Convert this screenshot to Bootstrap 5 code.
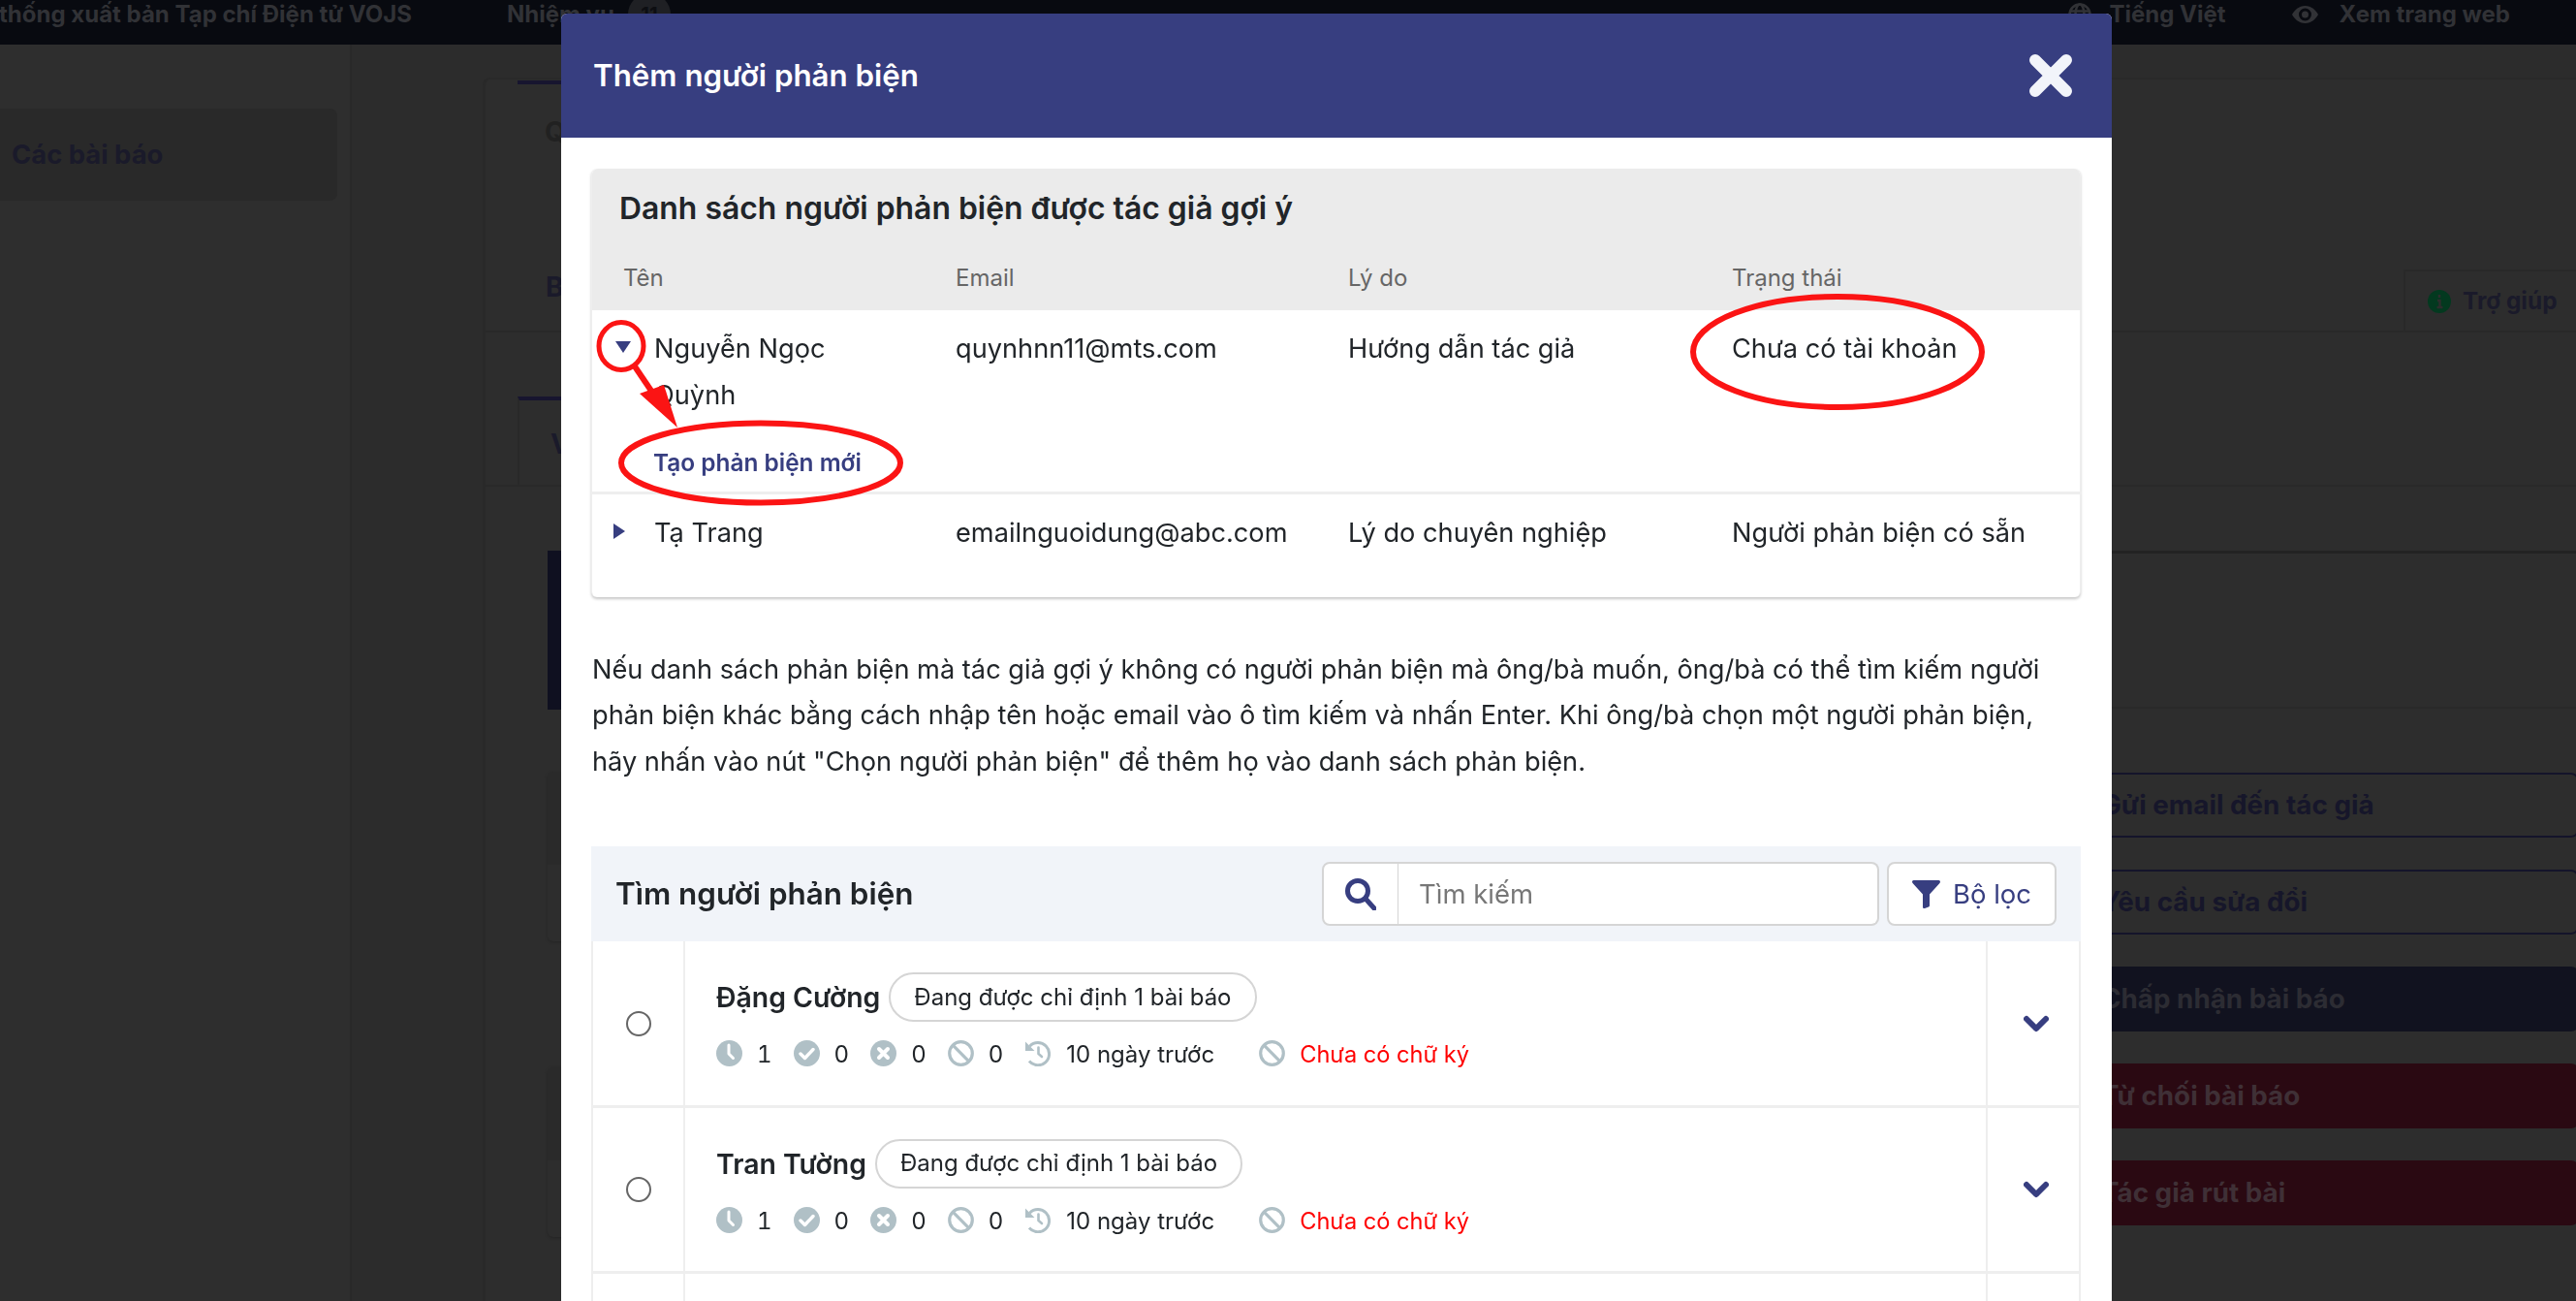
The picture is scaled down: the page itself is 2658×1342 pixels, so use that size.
<!DOCTYPE html>
<html lang="vi">

<head>
  <meta charset="UTF-8">
  <meta name="viewport" content="width=device-width, initial-scale=1.0">
  <title>Thêm người phản biện</title>
  <link href="https://cdn.jsdelivr.net/npm/bootstrap@5.3.0/dist/css/bootstrap.min.css" rel="stylesheet">
  <style>
      html, body { height: 1342px; overflow: hidden; }
      body { background: #2e2e2e; font-family: Inter, "Noto Sans", sans-serif; font-size: 28px; color: #212529; }

      /* trang phía sau modal (đã tối) */
      .top-bar { height: 46px; padding: 0 68px 16px 0; background: #080a10; color: #313236; font-size: 24px; font-weight: 700; white-space: nowrap; }
      .top-brand { margin-left: -1px; }
      .top-task { margin-left: 98px; }
      .top-count { width: 44px; height: 44px; margin-left: 14px; border-radius: 50%; background: #1f2024; color: #0d0e12; font-size: 20px; }
      .top-lang { gap: 18px; margin-right: 68px; }
      .top-view { gap: 22px; }
      .page-wrap { height: 1296px; }
      .page-side { width: 363px; padding-top: 66px; border-right: 2px solid #292929; flex: none; }
      .side-item { width: 348px; height: 95px; padding-left: 12px; background: #292929; border-radius: 0 8px 8px 0; color: #1a1a2a; font-size: 27.400px; font-weight: 700; }
      .page-gap { width: 135px; background: #2c2c2c; flex: none; }
      .page-main { padding-top: 34px; background: #2c2c2c; color: #1a1a2a; font-weight: 700; min-width: 0; }
      .page-frame { height: 100%; background: #2d2d2d; border-top: 2px solid #292929; border-left: 3px solid #292929; border-top-left-radius: 8px; }
      .sec-top { height: 260px; border-bottom: 2px solid #292929; }
      .tab-mark { width: 200px; height: 4px; margin: 1px 0 0 33px; background: #17152f; }
      .sec-q { height: 50px; margin: 24px 0 0 61px; line-height: 50px; color: #212121; }
      .sec-row { margin-top: 117px; height: 63px; }
      .sec-b { margin: -3px 0 0 62px; }
      .help-tab { width: 178px; height: 63px; padding-left: 23px; gap: 12px; border-left: 2px solid #292929; border-top: 2px solid #292929; font-size: 24.400px; }
      .sec-mid { height: 159px; padding: 66px 0 0 33px; border-bottom: 2px solid #292929; }
      .v-tab { width: 500px; height: 93px; padding-left: 32px; border-top: 4px solid #17152f; border-left: 2px solid #292929; }
      .sec-low { padding-top: 66px; }
      .low-left { width: 1565px; margin-left: 64px; flex: none; }
      .dark-block { height: 164px; background: #0f1020; }
      .ghost-box { height: 175px; border-radius: 6px; overflow: hidden; box-shadow: 0 1px 3px #242424; }
      .ghost-box div:first-child { height: 96px; background: #2a2a2a; }
      .box-one { margin-top: 64px; }
      .box-two { margin-top: 130px; }
      .low-right { flex-grow: 1; min-width: 0; }
      .side-head { height: 163px; margin-bottom: 66px; border-top: 3px solid #232323; border-bottom: 2px solid #292929; }
      .act-stack { gap: 33px; margin-right: -3px; }
      .act-btn { height: 67px; padding: 0 0 0 38px; font-size: 27.800px; font-weight: 700; text-align: left; border-radius: 0 8px 8px 0; white-space: nowrap; }
      .act-line { border: 2px solid #14142a; border-left: 0; color: #16162a; background: transparent; }
      .act-navy { border: 0; background: #11121f; color: #2c2c33; }
      .act-red { border: 0; background: #2a0912; color: #3f3036; }

      /* modal */
      .modal-dialog.reviewer-dialog { max-width: 1600px; margin: 14px 0 0 579px; }
      .reviewer-dialog .modal-content { border: 0; border-radius: 6px 6px 0 0; font-size: 27.200px; }
      .reviewer-head { height: 128px; padding: 0 41px 0 33px; background: #373e80; border: 0; border-radius: 6px 6px 0 0; }
      .reviewer-head .modal-title { font-size: 31.300px; font-weight: 600; color: #fff; }
      .head-close { width: 44px; height: 44px; padding: 0; background: none; border: 0; line-height: 0; }
      .reviewer-body { padding: 32px 32px 0 31px; }

      .suggest-card { border: 0; border-left: 1px solid #eee; border-right: 1px solid #eee; border-radius: 6px; box-shadow: 0 2px 3px rgba(0, 0, 0, .22); }
      .suggest-title { height: 80px; padding: 2px 0 0 28px; background: #ebebeb; font-size: 31.900px; font-weight: 600; border-radius: 6px 6px 0 0; }
      .suggest-table { table-layout: fixed; margin: 0; --bs-table-bg: transparent; color: #212529; line-height: 48px; }
      .suggest-table thead tr { background: #ebebeb; }
      .suggest-table th { height: 66px; padding: 0; font-size: 24px; font-weight: 400; color: #666; vertical-align: middle; border: 0; }
      .suggest-table th:first-child { padding-left: 32px; }
      .suggest-table td { padding: 16px 0 0; border-bottom: 3px solid #eee; vertical-align: top; }
      .suggest-table tr:last-child td { height: 107px; border: 0; }
      .suggest-table td.name-cell { padding-left: 20px; }
      .caret-box { width: 44px; flex: none; }
      .caret-down { margin: 16px 0 0 4px; }
      .caret-right { margin: 14px 0 0 2px; }
      .new-link { display: block; margin: 27px 0 12px 43px; font-size: 24.400px; font-weight: 600; line-height: 36px; color: #373e80; text-decoration: none; }
      .annot-layer { position: absolute; top: 0; left: 0; width: 100%; height: 100%; overflow: visible; pointer-events: none; z-index: 5; }

      .intro-text { margin: 51px 0 64px 1px; line-height: 47.600px; }

      .search-panel { height: 98px; padding: 0 25px; background: #f1f4f9; }
      .search-title { font-size: 31.400px; font-weight: 600; }
      .search-group { width: 575px; height: 66px; margin-right: 8px; flex: none; }
      .search-group .input-group-text { width: 80px; padding: 0; justify-content: center; background: #fff; border: 2px solid #d5d5d5; border-radius: 8px 0 0 8px; }
      .search-group .form-control { padding-left: 21px; font-size: 27.500px; color: #333; border: 2px solid #d5d5d5; border-left: 0; border-radius: 0 8px 8px 0; }
      .search-group .form-control::placeholder { color: #777; }
      .filter-btn { width: 175px; height: 66px; padding: 0; gap: 13px; font-size: 27.500px; color: #373e80; background: #fff; border: 2px solid #d5d5d5; border-radius: 8px; }

      .person-row { height: 171.600px; border: 2px solid #eee; border-width: 0 2px 3px; }
      .pick-col { width: 93px; flex: none; }
      .pick-col .form-check-input { width: 26px; height: 26px; margin: 0; border: 2px solid #666; }
      .person-main { padding: 32px 0 0 32px; border-left: 2px solid #eee; border-right: 2px solid #eee; min-width: 0; }
      .person-name { font-size: 28.400px; font-weight: 600; line-height: 51px; }
      .load-pill { height: 51px; margin-left: 9px; padding: 0 24px; border: 2px solid #d5d5d5; border-radius: 26px; font-size: 24px; background: #fff; }
      .person-stats { margin-top: 19px; font-size: 24px; line-height: 30px; white-space: nowrap; }
      .stat-item { gap: 15px; margin-right: 22px; }
      .stat-num { font-variant-numeric: tabular-nums; }
      .stat-item.stat-date { gap: 16px; margin-right: 46px; }
      .stat-item svg { width: 27px; height: 27px; flex: none; }
      .no-sign { font-size: 23.600px; color: #f00; }
      .more-col { width: 94px; padding-left: 6px; flex: none; }
  </style>
</head>

<body>
<svg width="0" height="0" class="d-block" aria-hidden="true">
  <defs>
    <symbol id="ico-clock" viewBox="0 0 27 27">
      <circle cx="13.5" cy="13.5" r="13.5" fill="#b0c0c6"/>
      <path d="M13 5v9l4.5 4.5" fill="none" stroke="#fff" stroke-width="3" stroke-linecap="round" stroke-linejoin="round"/>
    </symbol>
    <symbol id="ico-ok" viewBox="0 0 27 27">
      <circle cx="13.5" cy="13.5" r="13.5" fill="#b0c0c6"/>
      <path d="M7 14l4.5 4.5L20 9.5" fill="none" stroke="#fff" stroke-width="3.4" stroke-linecap="round" stroke-linejoin="round"/>
    </symbol>
    <symbol id="ico-no" viewBox="0 0 27 27">
      <circle cx="13.5" cy="13.5" r="13.5" fill="#b0c0c6"/>
      <path d="M9 9l9 9M18 9l-9 9" fill="none" stroke="#fff" stroke-width="4" stroke-linecap="round"/>
    </symbol>
    <symbol id="ico-ban" viewBox="0 0 27 27">
      <circle cx="13.5" cy="13.5" r="11.8" fill="none" stroke="#b0c0c6" stroke-width="3.2"/>
      <path d="M5.2 5.2l16.6 16.6" stroke="#b0c0c6" stroke-width="3.2"/>
    </symbol>
    <symbol id="ico-history" viewBox="0 0 27 27">
      <path d="M5.5 6.2A11.6 11.6 0 1 1 5 21.5" fill="none" stroke="#b0c0c6" stroke-width="3"/>
      <path d="M1 1.5l9.5 9.5H1z" fill="#b0c0c6"/>
      <path d="M14.5 7.5v6.5l3.5 3" fill="none" stroke="#b0c0c6" stroke-width="2.6" stroke-linecap="round"/>
    </symbol>
  </defs>
</svg>

<!-- trang phía sau -->
<nav class="top-bar d-flex align-items-center">
  <span class="top-brand">thống xuất bản Tạp chí Điện tử VOJS</span>
  <span class="top-task">Nhiệm vụ</span>
  <span class="top-count d-flex align-items-center justify-content-center">11</span>
  <span class="top-lang d-flex align-items-center ms-auto">
    <svg width="24" height="24" viewBox="0 0 24 24" fill="none" stroke="#313236" stroke-width="2.5"><circle cx="12" cy="12" r="10.5"/><ellipse cx="12" cy="12" rx="4.5" ry="10.5"/><path d="M2 8.5h20M2 15.5h20"/></svg>
    Tiếng Việt
  </span>
  <span class="top-view d-flex align-items-center">
    <svg width="27" height="18" viewBox="0 0 27 18"><path d="M13.5 0C7 0 2.500 4.500 0 9c2.500 4.500 7 9 13.500 9S24.500 13.500 27 9C24.500 4.500 20 0 13.500 0zm0 15.500a6.500 6.500 0 1 1 0-13 6.500 6.500 0 0 1 0 13zm0-10a3.500 3.500 0 1 0 0 7 3.500 3.500 0 0 0 0-7z" fill="#313236"/></svg>
    Xem trang web
  </span>
</nav>

<div class="page-wrap d-flex">
  <aside class="page-side">
    <div class="side-item d-flex align-items-center">Các bài báo</div>
  </aside>
  <div class="page-gap"></div>
  <main class="page-main flex-grow-1">
    <div class="page-frame">
      <section class="sec-top">
        <div class="tab-mark"></div>
        <div class="sec-q">Q</div>
        <div class="sec-row d-flex justify-content-between">
          <span class="sec-b">B</span>
          <div class="help-tab d-flex align-items-center">
            <svg width="24" height="24" viewBox="0 0 24 24"><circle cx="12" cy="12" r="12" fill="#03391f"/><path d="M12 5v3M10 11h2.500v7M9.500 18h6" stroke="#2d2d2d" stroke-width="2.500" fill="none"/></svg>
            Trợ giúp
          </div>
        </div>
      </section>
      <section class="sec-mid">
        <div class="v-tab d-flex align-items-center">V</div>
      </section>
      <section class="sec-low d-flex">
        <div class="low-left">
          <div class="dark-block"></div>
          <div class="ghost-box box-one"><div></div></div>
          <div class="ghost-box box-two"><div></div></div>
        </div>
        <div class="low-right">
          <div class="side-head"></div>
          <div class="act-stack d-flex flex-column">
            <button class="btn act-btn act-line" type="button">Gửi email đến tác giả</button>
            <button class="btn act-btn act-line" type="button">Yêu cầu sửa đổi</button>
            <button class="btn act-btn act-navy" type="button">Chấp nhận bài báo</button>
            <button class="btn act-btn act-red" type="button">Từ chối bài báo</button>
            <button class="btn act-btn act-red" type="button">Tác giả rút bài</button>
          </div>
        </div>
      </section>
    </div>
  </main>
</div>

<!-- modal -->
<div class="modal d-block" tabindex="-1">
  <div class="modal-dialog reviewer-dialog">
    <div class="modal-content">
      <div class="modal-header reviewer-head d-flex justify-content-between align-items-center">
        <h5 class="modal-title">Thêm người phản biện</h5>
        <button type="button" class="head-close" aria-label="Đóng">
          <svg width="44" height="44" viewBox="0 0 44 44"><path d="M6 6l32 32M38 6L6 38" stroke="#f2f4fa" stroke-width="12" stroke-linecap="round"/></svg>
        </button>
      </div>
      <div class="modal-body reviewer-body">

        <div class="card suggest-card">
          <div class="suggest-title d-flex align-items-center">Danh sách người phản biện được tác giả gợi ý</div>
          <table class="table suggest-table">
            <colgroup>
              <col style="width: 375px">
              <col style="width: 405px">
              <col style="width: 396px">
              <col style="width: 361px">
            </colgroup>
            <thead>
            <tr>
              <th>Tên</th>
              <th>Email</th>
              <th>Lý do</th>
              <th>Trạng thái</th>
            </tr>
            </thead>
            <tbody>
            <tr>
              <td class="name-cell">
                <div class="d-flex">
                  <div class="caret-box">
                    <svg class="caret-down d-block" width="16" height="12" viewBox="0 0 16 12"><path d="M0 0h16L8 12z" fill="#373e80"/></svg>
                  </div>
                  <div>Nguyễn Ngọc<br>Quỳnh</div>
                </div>
                <a class="new-link" href="#">Tạo phản biện mới</a>
              </td>
              <td>quynhnn11@mts.com</td>
              <td>Hướng dẫn tác giả</td>
              <td>Chưa có tài khoản</td>
            </tr>
            <tr>
              <td class="name-cell">
                <div class="d-flex">
                  <div class="caret-box">
                    <svg class="caret-right d-block" width="12" height="16" viewBox="0 0 12 16"><path d="M0 0l12 8L0 16z" fill="#373e80"/></svg>
                  </div>
                  <div>Tạ Trang</div>
                </div>
              </td>
              <td>emailnguoidung@abc.com</td>
              <td>Lý do chuyên nghiệp</td>
              <td>Người phản biện có sẵn</td>
            </tr>
            </tbody>
          </table>
          <svg class="annot-layer" aria-hidden="true">
            <g fill="none" stroke="#fb1414">
              <ellipse cx="30" cy="183" rx="23" ry="24.500" stroke-width="5"/>
              <path d="M44 204L67 238" stroke-width="6"/>
              <ellipse cx="174" cy="303.500" rx="144" ry="41" stroke-width="6"/>
              <ellipse cx="1285" cy="189" rx="149" ry="57" stroke-width="6"/>
            </g>
            <path d="M88 267L49 232L74 223z" fill="#fb1414"/>
          </svg>
        </div>

        <p class="intro-text">Nếu danh sách phản biện mà tác giả gợi ý không có người phản biện mà ông/bà muốn, ông/bà có thể tìm kiếm người phản biện khác bằng cách nhập tên hoặc email vào ô tìm kiếm và nhấn Enter. Khi ông/bà chọn một người phản biện, hãy nhấn vào nút "Chọn người phản biện" để thêm họ vào danh sách phản biện.</p>

        <div class="search-panel d-flex align-items-center">
          <div class="search-title me-auto">Tìm người phản biện</div>
          <div class="input-group search-group">
            <span class="input-group-text">
              <svg width="32" height="33" viewBox="0 0 32 33" fill="none" stroke="#373e80" stroke-width="5"><circle cx="13" cy="13" r="10.500"/><path d="M21 21l9 10" stroke-linecap="round"/></svg>
            </span>
            <input type="text" class="form-control" placeholder="Tìm kiếm">
          </div>
          <button class="btn filter-btn d-flex align-items-center justify-content-center" type="button">
            <svg width="29" height="29" viewBox="0 0 29 29"><path d="M0 1.500Q0 0 1.500 0h26Q29 0 29 1.500q0 1-1 2L18 14.500V26q0 1-1 1.500l-4 1.500q-2 .5-2-1.500V14.500L1 3.500q-1-1-1-2z" fill="#373e80"/></svg>
            Bộ lọc
          </button>
        </div>

        <div class="person-row d-flex">
          <div class="pick-col d-flex align-items-center justify-content-center"><input class="form-check-input" type="radio" name="reviewer"></div>
          <div class="person-main flex-grow-1">
            <div class="d-flex">
              <span class="person-name">Đặng Cường</span>
              <span class="load-pill d-flex align-items-center">Đang được chỉ định 1 bài báo</span>
            </div>
            <div class="person-stats d-flex">
              <span class="stat-item stat-num d-flex"><svg><use href="#ico-clock"/></svg>1</span>
              <span class="stat-item stat-num d-flex"><svg><use href="#ico-ok"/></svg>0</span>
              <span class="stat-item stat-num d-flex"><svg><use href="#ico-no"/></svg>0</span>
              <span class="stat-item stat-num d-flex"><svg><use href="#ico-ban"/></svg>0</span>
              <span class="stat-item stat-date d-flex"><svg><use href="#ico-history"/></svg>10 ngày trước</span>
              <span class="stat-item no-sign d-flex"><svg><use href="#ico-ban"/></svg>Chưa có chữ ký</span>
            </div>
          </div>
          <div class="more-col d-flex align-items-center justify-content-center">
            <svg width="26" height="18" viewBox="0 0 26 18"><path d="M3 4l10 10L23 4" fill="none" stroke="#373e80" stroke-width="6" stroke-linecap="round" stroke-linejoin="round"/></svg>
          </div>
        </div>

        <div class="person-row d-flex">
          <div class="pick-col d-flex align-items-center justify-content-center"><input class="form-check-input" type="radio" name="reviewer"></div>
          <div class="person-main flex-grow-1">
            <div class="d-flex">
              <span class="person-name">Tran Tường</span>
              <span class="load-pill d-flex align-items-center">Đang được chỉ định 1 bài báo</span>
            </div>
            <div class="person-stats d-flex">
              <span class="stat-item stat-num d-flex"><svg><use href="#ico-clock"/></svg>1</span>
              <span class="stat-item stat-num d-flex"><svg><use href="#ico-ok"/></svg>0</span>
              <span class="stat-item stat-num d-flex"><svg><use href="#ico-no"/></svg>0</span>
              <span class="stat-item stat-num d-flex"><svg><use href="#ico-ban"/></svg>0</span>
              <span class="stat-item stat-date d-flex"><svg><use href="#ico-history"/></svg>10 ngày trước</span>
              <span class="stat-item no-sign d-flex"><svg><use href="#ico-ban"/></svg>Chưa có chữ ký</span>
            </div>
          </div>
          <div class="more-col d-flex align-items-center justify-content-center">
            <svg width="26" height="18" viewBox="0 0 26 18"><path d="M3 4l10 10L23 4" fill="none" stroke="#373e80" stroke-width="6" stroke-linecap="round" stroke-linejoin="round"/></svg>
          </div>
        </div>

        <div class="person-row d-flex">
          <div class="pick-col"></div>
          <div class="person-main flex-grow-1"></div>
          <div class="more-col"></div>
        </div>

      </div>
    </div>
  </div>
</div>

<script src="https://cdn.jsdelivr.net/npm/bootstrap@5.3.0/dist/js/bootstrap.bundle.min.js"></script>
</body>

</html>
